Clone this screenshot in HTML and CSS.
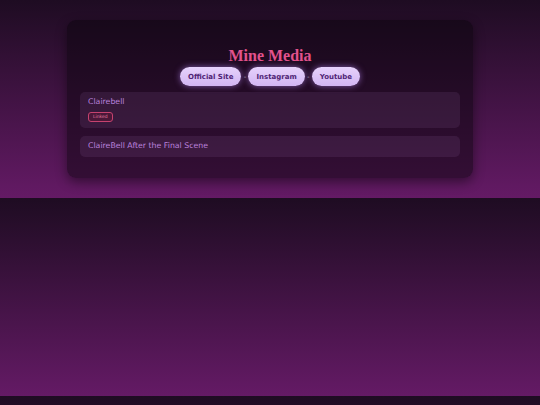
FILE: index.html
```html
<!DOCTYPE html>
<html>
<head>
<meta charset="utf-8">
<link rel="stylesheet" href="styles.css">
</head>
<body>
<div class="card">
  <h1 class="title">Mine Media</h1>
  <div class="links">
    <a class="pill">Official Site</a><span class="sep">-</span><a class="pill">Instagram</a><span class="sep">-</span><a class="pill">Youtube</a>
  </div>
  <div class="item">
    <div class="name">Clairebell</div>
    <span class="badge">Linked</span>
  </div>
  <div class="item">
    <div class="name">ClaireBell After the Final Scene</div>
  </div>
</div>
</body>
</html>
```
FILE: styles.css
```css
body {
  margin: 0;
  padding: 20px 0;
  background: linear-gradient(#1e0c22, #641a65);
  font-family: "DejaVu Sans", sans-serif;
}
.card {
  width: 406px;
  margin: 0 auto;
  box-sizing: border-box;
  padding: 26px 13px 21px;
  border-radius: 9px;
  background: rgba(10, 4, 12, 0.5);
  box-shadow: 0 4px 12px rgba(0, 0, 0, 0.45);
}
.title {
  margin: 0;
  text-align: center;
  font-family: "Liberation Serif", serif;
  font-weight: bold;
  font-size: 16px;
  line-height: 20px;
  color: #e2528c;
}
.links {
  display: flex;
  justify-content: center;
  align-items: center;
  margin-top: 1px;
}
.pill {
  display: flex;
  align-items: center;
  height: 19px;
  padding: 0 8px;
  border-radius: 10px;
  background: linear-gradient(#e6d2fb, #d2b5f3);
  color: #4f2475;
  font-size: 7px;
  font-weight: bold;
  box-shadow: 0 0 6px rgba(190, 140, 255, 0.6);
}
.sep {
  width: 7px;
  text-align: center;
  color: #b9a9c0;
  font-size: 7px;
}
.item {
  margin-top: 6px;
  padding: 5px 8px 6px;
  border-radius: 5px;
  background: rgba(200, 150, 220, 0.1);
}
.item + .item {
  margin-top: 8px;
}
.name {
  color: #bb82de;
  font-size: 7.8px;
  line-height: 10px;
}
.badge {
  display: block;
  width: fit-content;
  box-sizing: border-box;
  margin-top: 5px;
  padding: 0 4px;
  height: 10px;
  line-height: 8px;
  border: 1px solid #c6426f;
  border-radius: 3px;
  color: #e07aa0;
  font-size: 4.5px;
  background: rgba(120, 20, 50, 0.3);
}
```
